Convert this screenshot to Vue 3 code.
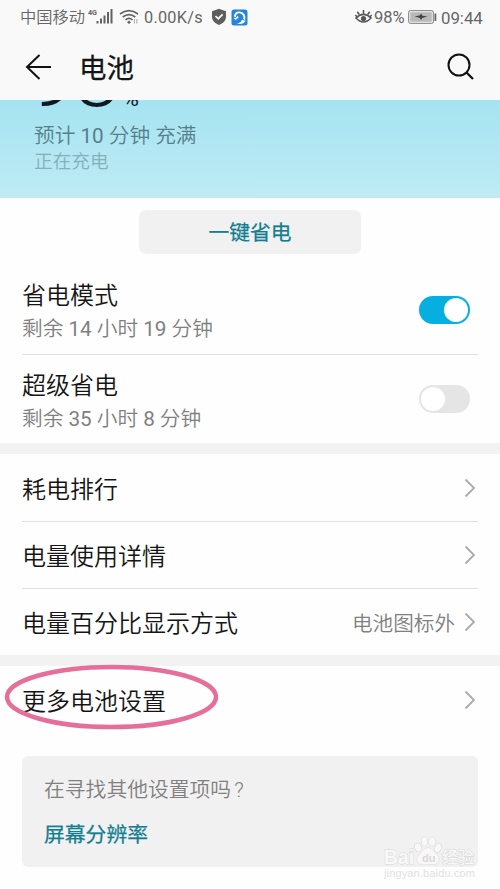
<script setup>
import { ref } from 'vue'

const modes = ref([
  { title: '省电模式', sub: '剩余 14 小时 19 分钟', on: true },
  { title: '超级省电', sub: '剩余 35 小时 8 分钟', on: false },
])
const links = [
  { title: '耗电排行', value: '' },
  { title: '电量使用详情', value: '' },
  { title: '电量百分比显示方式', value: '电池图标外' },
]
// Splits a text so that its numbers can carry their own weight.
const parts = (text) => text.split(/(\d+)/).filter(Boolean)
const isNumber = (part) => /^\d+$/.test(part)
</script>

<template>
  <div class="screen">
    <header>
      <div class="status">
        <span class="carrier">中国移动</span>
        <svg class="signal" width="26" height="18" viewBox="0 0 26 18">
          <text x="0" y="6.800" class="net" textLength="9" lengthAdjust="spacingAndGlyphs">4G</text>
          <g fill="#636363">
            <rect x="8.500" y="13" width="2" height="2.500" /><rect x="12" y="10.500" width="2" height="5" /><rect x="15.500" y="7.500" width="2" height="8" /><rect x="19" y="4" width="2" height="11.500" /><rect x="22.500" y="1" width="2" height="14.500" />
          </g>
        </svg>
        <svg class="wifi" width="20" height="18" viewBox="0 0 20 18" fill="none" stroke="#636363" stroke-width="1.700">
          <path d="M1 6Q10-.8 19 6M3.700 9Q10 4.200 16.300 9M6.500 11.800Q10 9 13.500 11.800" />
          <path d="M8 14.200 10 12.500 12 14.200 10 16Z" fill="#636363" stroke="none" />
          <path d="M15.400 11v4.500M17.800 11v4.500" stroke-width="1.200" opacity=".45" />
        </svg>
        <span class="speed">0.00K/s</span>
        <svg class="shield" width="16" height="18" viewBox="0 0 16 18">
          <path d="M8 .8 15 3.200V8.500C15 12.800 12 15.300 8 17 4 15.300 1 12.800 1 8.500V3.200Z" fill="#5e5e5e" />
          <path d="m4.500 8 2.800 2.700 4.300-4.300" fill="none" stroke="#f9f9f9" stroke-width="1.700" />
        </svg>
        <svg class="app" width="17" height="17" viewBox="0 0 17 17">
          <rect x=".5" y=".5" width="16" height="16" rx="2.500" fill="#2585da" />
          <path d="M4.200 8C3.500 5 6 3 8.800 3.400c3.700.4 5.400 4.100 4.400 7.200" fill="none" stroke="#fff" stroke-width="1.900" />
          <path d="M2.500 8.700c2 .6 3.600-.2 4.200-2.200l.8 2.200-3 2.200ZM6 14.300c2.800 0 4.500-1.300 5-3.700 1 1 2.200 1.200 3.700.8-1.500 3.300-5.600 4.400-8.700 2.900Z" fill="#fff" />
        </svg>
        <svg class="eye" width="17" height="18" viewBox="0 0 17 18" fill="none" stroke="#555" stroke-width="1.600">
          <path d="M1 10Q8.500 2.800 16 10Q8.500 18 1 10ZM8.500 6V2M4.200 6.500 2.300 3.800M12.800 6.500l1.900-2.700M2 8.700.3 7M15 8.700l1.700-1.700" />
          <circle cx="8.500" cy="10.500" r="2.600" fill="#555" stroke="none" />
        </svg>
        <span class="percent">98%</span>
        <svg class="cell" width="29" height="16" viewBox="0 0 29 16">
          <rect x=".7" y="1.700" width="24.600" height="12.600" rx="1.500" fill="#f9f9f9" stroke="#777" />
          <rect x="2.200" y="3.200" width="21.600" height="9.600" fill="#b9b9b9" />
          <rect x="26.500" y="4.500" width="1.800" height="7.500" fill="#666" />
          <path d="M6.500 7.500 12 6.300 13 4.500 14.500 6.700 19.500 7.500 14.200 9 13 11 11.500 8.800Z" fill="#444" />
        </svg>
        <span class="time">09:44</span>
      </div>
      <div class="titlebar">
        <svg width="28" height="28" viewBox="0 0 28 28" fill="none" stroke="#111" stroke-width="2">
          <path d="M27 14H3M15.500 2 3 14l12.500 12" />
        </svg>
        <h1>电池</h1>
        <svg width="30" height="30" viewBox="0 0 30 30" fill="none" stroke="#111" stroke-width="2">
          <circle cx="13" cy="13" r="10.500" /><path d="m20.500 20.500 6.500 6.500" stroke-width="2.300" />
        </svg>
      </div>
    </header>

    <section class="hero">
      <div class="level">98<small>%</small></div>
      <p class="estimate"><span v-for="(p, i) in parts('预计 10 分钟 充满')" :key="i" :class="{ num: isNumber(p) }">{{ p }}</span></p>
      <p class="charging">正在充电</p>
    </section>

    <div class="action"><button>一键省电</button></div>

    <section class="modes">
      <div v-for="m in modes" :key="m.title" class="mode">
        <div>
          <div class="title">{{ m.title }}</div>
          <div class="sub"><span v-for="(p, i) in parts(m.sub)" :key="i" :class="{ num: isNumber(p) }">{{ p }}</span></div>
        </div>
        <span class="switch" :class="{ on: m.on }" @click="m.on = !m.on"><i /></span>
      </div>
    </section>

    <section class="group">
      <div v-for="l in links" :key="l.title" class="row">
        <span class="title">{{ l.title }}</span>
        <span class="value">{{ l.value }}</span>
        <svg class="chevron" width="12" height="20" viewBox="0 0 12 20"><path d="m1.500 1.500 8.500 8.500-8.500 8.500" /></svg>
      </div>
    </section>

    <section class="group more">
      <div class="row">
        <span class="title">更多电池设置</span>
        <span class="value"></span>
        <svg class="chevron" width="12" height="20" viewBox="0 0 12 20"><path d="m1.500 1.500 8.500 8.500-8.500 8.500" /></svg>
      </div>
      <svg class="ring" width="216" height="68" viewBox="0 0 216 68"><ellipse cx="107.500" cy="33" rx="104.500" ry="30" /></svg>
    </section>

    <section class="card">
      <p>在寻找其他设置项吗<span class="mark">?</span></p>
      <a>屏幕分辨率</a>
      <svg class="watermark" width="98" height="48" viewBox="0 0 98 48">
        <g fill="#f8f8f8" stroke="#d8d8d8" stroke-width="1" paint-order="stroke">
          <text x="0" y="28" class="wm" textLength="30" lengthAdjust="spacingAndGlyphs">Bai</text>
          <ellipse cx="34" cy="11.500" rx="3" ry="4.200" transform="rotate(-20 34 11.500)" />
          <ellipse cx="40.500" cy="5.500" rx="3" ry="4.300" />
          <ellipse cx="48" cy="5.500" rx="3" ry="4.300" />
          <ellipse cx="54" cy="12" rx="3" ry="4.200" transform="rotate(20 54 12)" />
          <path d="M44 12c4 0 6 4.500 9 7 4 4 1 10-4 9.500-3-.5-7-.5-10 0-5 .5-8-5.500-4-9.500 3-2.500 5-7 9-7Z" />
          <text x="58" y="27" class="wm-cn" textLength="32">经验</text>
        </g>
        <text x="38" y="26" class="du">du</text>
        <text x="0" y="41" class="url" textLength="91">jingyan.baidu.com</text>
      </svg>
    </section>
  </div>
</template>

<style>
body { margin: 0; background: #fefefe; }
</style>

<style scoped>
* { box-sizing: border-box; }
.screen { width: 500px; height: 889px; overflow: hidden; background: #fefefe; color: #151515; font-family: Roboto, "Noto Sans CJK SC", sans-serif; font-weight: 400; }
p, h1 { margin: 0; font-weight: 400; }
svg { display: block; flex: none; }
header { height: 100px; background: #f9f9f9; }
.status { height: 34px; display: flex; align-items: center; padding: 0 16px 0 20px; color: #666; font-size: 16.500px; line-height: 34px; white-space: nowrap; }
.status > span { padding-top: 1px; }
.carrier { width: 68px; font-size: 16.300px; font-weight: 350; }
.net { font: 700 7.500px Roboto, sans-serif; fill: #636363; }
.wifi { margin-left: 5px; }
.speed { width: 60px; margin-left: 5px; font-size: 16.300px; letter-spacing: .25px; }
.shield { margin-left: 7px; }
.app { margin-left: 4px; }
.eye { margin-left: auto; }
.percent { margin-left: 2px; width: 32px; }
.cell { margin-left: 2px; }
.time { margin-left: 4px; width: 43px; font-size: 16.800px; }
.titlebar { height: 66px; padding: 0 24px 0 24px; display: flex; align-items: center; }
h1 { flex: 1; margin-left: 27px; padding-top: 3px; font-size: 27.500px; line-height: 40px; font-weight: 400; -webkit-text-stroke: .25px #151515; }
.hero { height: 98px; overflow: hidden; padding-left: 34px; background: linear-gradient(#a5e3f1, #bfebf4); }
.level { height: 82px; margin: -59px 0 0 -4px; line-height: 76px; font-size: 80px; font-weight: 350; color: #101820; white-space: nowrap; }
.level small { font-size: 22px; font-weight: 400; margin-left: 4px; }
.estimate { font-size: 20.700px; line-height: 26px; color: #568089; font-weight: 350; white-space: pre; }
.charging { font-size: 18.700px; line-height: 26px; color: #83b0b9; font-weight: 350; }
.num { font-weight: 400; }
.action { height: 67px; padding-top: 12px; display: flex; justify-content: center; align-items: flex-start; }
button { width: 222px; height: 44px; border: 0; border-radius: 7px; background: #f1f1f1; color: #137d91; font: 400 20.800px/44px Roboto, "Noto Sans CJK SC", sans-serif; -webkit-text-stroke: .25px #137d91; padding: 1px 0 0; }
.modes { height: 178px; padding: 0 22px; }
.mode { height: 90px; padding: 13px 8px 0 0; display: flex; justify-content: space-between; border-bottom: 1px solid #dfdfdf; }
.mode + .mode { height: 88px; border-bottom: 0; }
.mode .title { line-height: 37px; }
.title { font-size: 24px; font-weight: 350; white-space: nowrap; }
.sub { font-size: 20.700px; line-height: 28px; color: #808080; font-weight: 350; white-space: pre; }
.switch { width: 51px; height: 28px; margin-top: 18px; padding: 2px; border-radius: 14px; background: #e5e5e5; display: flex; }
.mode + .mode .switch { margin-top: 17px; }
.switch i { width: 24px; height: 24px; border-radius: 50%; background: #fff; }
.switch.on { background: #07afe0; justify-content: flex-end; }
.group { border-top: 11px solid #f2f2f2; padding: 0 22px; }
.row { height: 67px; display: flex; align-items: center; padding: 0 2px 0 0; }
.group .row + .row { box-shadow: inset 0 1px #dfdfdf; }
.value { flex: 1; text-align: right; margin-right: 9px; font-size: 20.600px; color: #808080; font-weight: 350; }
.chevron { fill: none; stroke: #aaa; stroke-width: 1.800; }
.more { position: relative; height: 101px; }
.ring { position: absolute; left: 4px; top: -2px; fill: none; stroke: #e66f99; stroke-width: 4.500; }
.card { position: relative; width: 456px; height: 111px; margin: 0 auto; border-radius: 6px; background: #f1f1f1; padding: 12px 22px 0; font-size: 20.800px; }
.card p { line-height: 45px; color: #808080; font-weight: 350; }
.mark { margin-left: 3px; }
.card a { line-height: 45px; display: block; color: #137d91; font-weight: 400; -webkit-text-stroke: .25px #137d91; }
.watermark { position: absolute; left: 362px; top: 80px; }
.wm { font: 700 21px "Liberation Sans", sans-serif; }
.wm-cn { font: 500 16px "Noto Sans CJK SC", sans-serif; }
.du { font: 700 11px "Liberation Sans", sans-serif; fill: #d9d9d9; }
.url { font: 400 11px "Liberation Sans", sans-serif; fill: #e1e1e1; }
</style>
